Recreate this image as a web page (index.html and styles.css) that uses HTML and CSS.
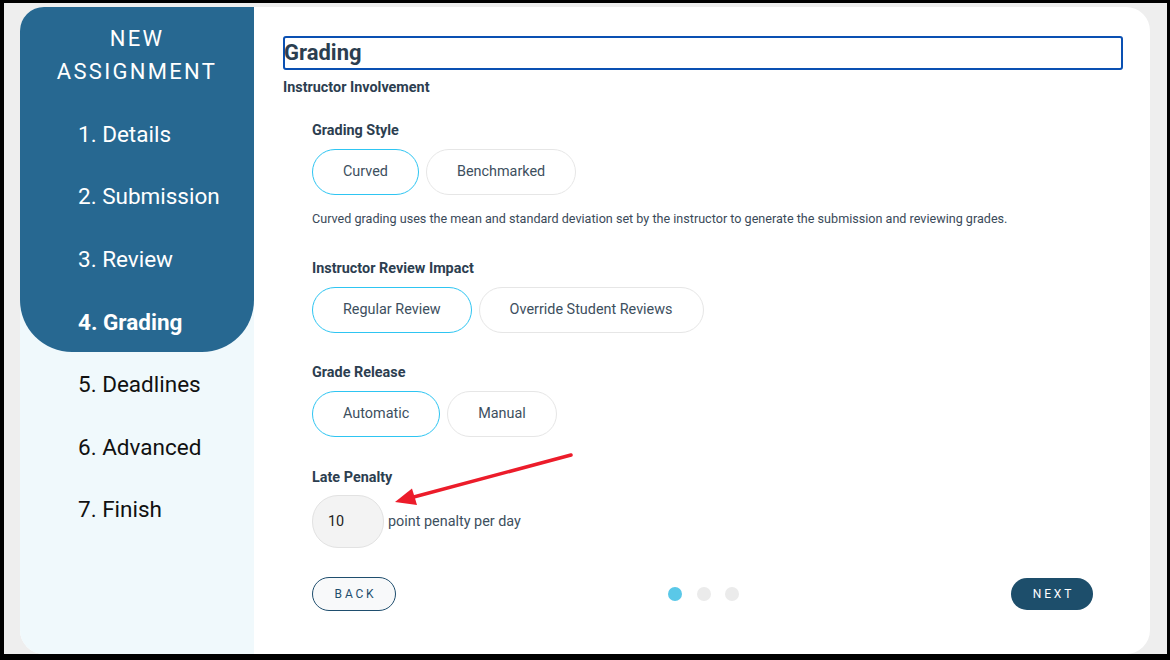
FILE: index.html
```html
<!DOCTYPE html>
<html>
<head>
<meta charset="utf-8">
<link rel="stylesheet" href="styles.css">
</head>
<body>
<div class="screen">
  <div class="card">
    <aside class="sidebar">
      <div class="sidebar-top">
        <div class="sidebar-title">NEW<br>ASSIGNMENT</div>
        <div class="nav-item">1. Details</div>
        <div class="nav-item">2. Submission</div>
        <div class="nav-item">3. Review</div>
        <div class="nav-item active">4. Grading</div>
      </div>
      <div class="nav-item">5. Deadlines</div>
      <div class="nav-item">6. Advanced</div>
      <div class="nav-item">7. Finish</div>
    </aside>
    <main class="main">
      <div class="title-box">Grading</div>
      <div class="subhead">Instructor Involvement</div>
      <div class="section">
        <div class="label first">Grading Style</div>
        <div class="options">
          <div class="opt selected">Curved</div>
          <div class="opt">Benchmarked</div>
        </div>
        <div class="desc">Curved grading uses the mean and standard deviation set by the instructor to generate the submission and reviewing grades.</div>
        <div class="label l2">Instructor Review Impact</div>
        <div class="options">
          <div class="opt selected">Regular Review</div>
          <div class="opt">Override Student Reviews</div>
        </div>
        <div class="label l3">Grade Release</div>
        <div class="options">
          <div class="opt selected">Automatic</div>
          <div class="opt">Manual</div>
        </div>
        <div class="label l4">Late Penalty</div>
        <div class="penalty-row">
          <div class="penalty-input">10</div>
          <span class="penalty-text">point penalty per day</span>
        </div>
        <div class="footer">
          <div class="btn-back">BACK</div>
          <div class="dots">
            <span class="dot on"></span>
            <span class="dot"></span>
            <span class="dot"></span>
          </div>
          <div class="btn-next">NEXT</div>
        </div>
      </div>
    </main>
  </div>
</div>
<svg class="arrow" width="1170" height="660" viewBox="0 0 1170 660">
  <line x1="571" y1="455" x2="410" y2="498" stroke="#ec1c2a" stroke-width="3.5" stroke-linecap="round"/>
  <polygon points="395,502 412,488.5 417,505" fill="#ec1c2a"/>
</svg>
</body>
</html>
```

FILE: styles.css
```css
* { box-sizing: border-box; }
html, body { margin: 0; }
body {
  background: #000;
  padding: 3px 3px 6px 4px;
  width: 1170px;
  height: 660px;
  font-family: Roboto, "Liberation Sans", sans-serif;
  position: relative;
  overflow: hidden;
}
.screen {
  background: #eeeeee;
  height: 651px;
  padding: 4px 17px 0 16px;
}
.card {
  display: flex;
  height: 647px;
  background: #fff;
  border-radius: 24px;
  overflow: hidden;
}
.sidebar {
  width: 234px;
  flex: none;
  background: #f0f9fc;
}
.sidebar-top {
  background: #276891;
  height: 345px;
  border-radius: 0 0 52px 52px;
  padding-top: 14.5px;
}
.sidebar-title {
  color: #fff;
  text-align: center;
  font-size: 22px;
  line-height: 33px;
  letter-spacing: 2.3px;
  margin-bottom: 15px;
}
.nav-item {
  height: 62.5px;
  line-height: 62.5px;
  padding-left: 58px;
  font-size: 22.5px;
  color: #111;
}
.sidebar-top .nav-item { color: #fff; }
.nav-item.active { font-weight: 700; line-height: 64px; }
.sidebar > .nav-item { line-height: 65px; }
.main {
  flex: 1;
  padding: 29px 27px 0 29px;
}
.title-box {
  height: 34px;
  border: 2px solid #0a50b2;
  border-radius: 3px;
  font-size: 22px;
  font-weight: 700;
  color: #2c3e50;
  line-height: 30px;
  text-indent: -1px;
}
.subhead {
  margin-top: 9px;
  font-size: 14.4px;
  line-height: 18px;
  font-weight: 700;
  color: #2c3e50;
}
.section {
  padding: 0 30px 0 29px;
}
.label {
  font-size: 14.4px;
  line-height: 18px;
  font-weight: 700;
  color: #2c3e50;
}
.label.first { margin-top: 25px; }
.label.l2 { margin-top: 33px; }
.label.l3 { margin-top: 31px; }
.label.l4 { margin-top: 32px; }
.options {
  display: flex;
  gap: 7px;
  margin-top: 9px;
}
.opt {
  height: 46px;
  line-height: 44px;
  padding: 0 30px;
  border: 1px solid #e6e6e6;
  border-radius: 23px;
  font-size: 14.4px;
  color: #3d4f5e;
  background: #fff;
}
.opt.selected { border-color: #2ec5f2; }
.desc {
  margin-top: 16px;
  font-size: 12.6px;
  line-height: 16px;
  color: #3a4a59;
}
.penalty-row {
  display: flex;
  align-items: center;
  margin-top: 8px;
  gap: 4px;
}
.penalty-input {
  width: 72px;
  height: 53px;
  border: 1px solid #e2e2e2;
  border-radius: 26px;
  background: #f3f3f3;
  font-size: 14.4px;
  color: #222;
  line-height: 51px;
  padding-left: 15px;
}
.penalty-text {
  font-size: 14.4px;
  color: #3d4f5e;
}
.footer {
  margin-top: 29px;
  display: flex;
  justify-content: space-between;
  align-items: center;
}
.btn-back {
  width: 84px;
  height: 34px;
  border: 1.5px solid #1f4e6e;
  border-radius: 17px;
  background: #f8f9fa;
  color: #1f4e6e;
  font-size: 12px;
  letter-spacing: 2.8px;
  text-align: center;
  line-height: 33px;
  padding-left: 3px;
}
.dots {
  display: flex;
  gap: 14.5px;
}
.dot {
  width: 14px;
  height: 14px;
  border-radius: 50%;
  background: #ebebeb;
}
.dot.on { background: #5ac8e8; }
.btn-next {
  width: 82px;
  height: 32px;
  border-radius: 16px;
  background: #1d4e6b;
  color: #fff;
  font-size: 12px;
  letter-spacing: 2.8px;
  text-align: center;
  line-height: 32px;
  padding-left: 3px;
}
.arrow {
  position: absolute;
  left: 0;
  top: 0;
  pointer-events: none;
}
```
